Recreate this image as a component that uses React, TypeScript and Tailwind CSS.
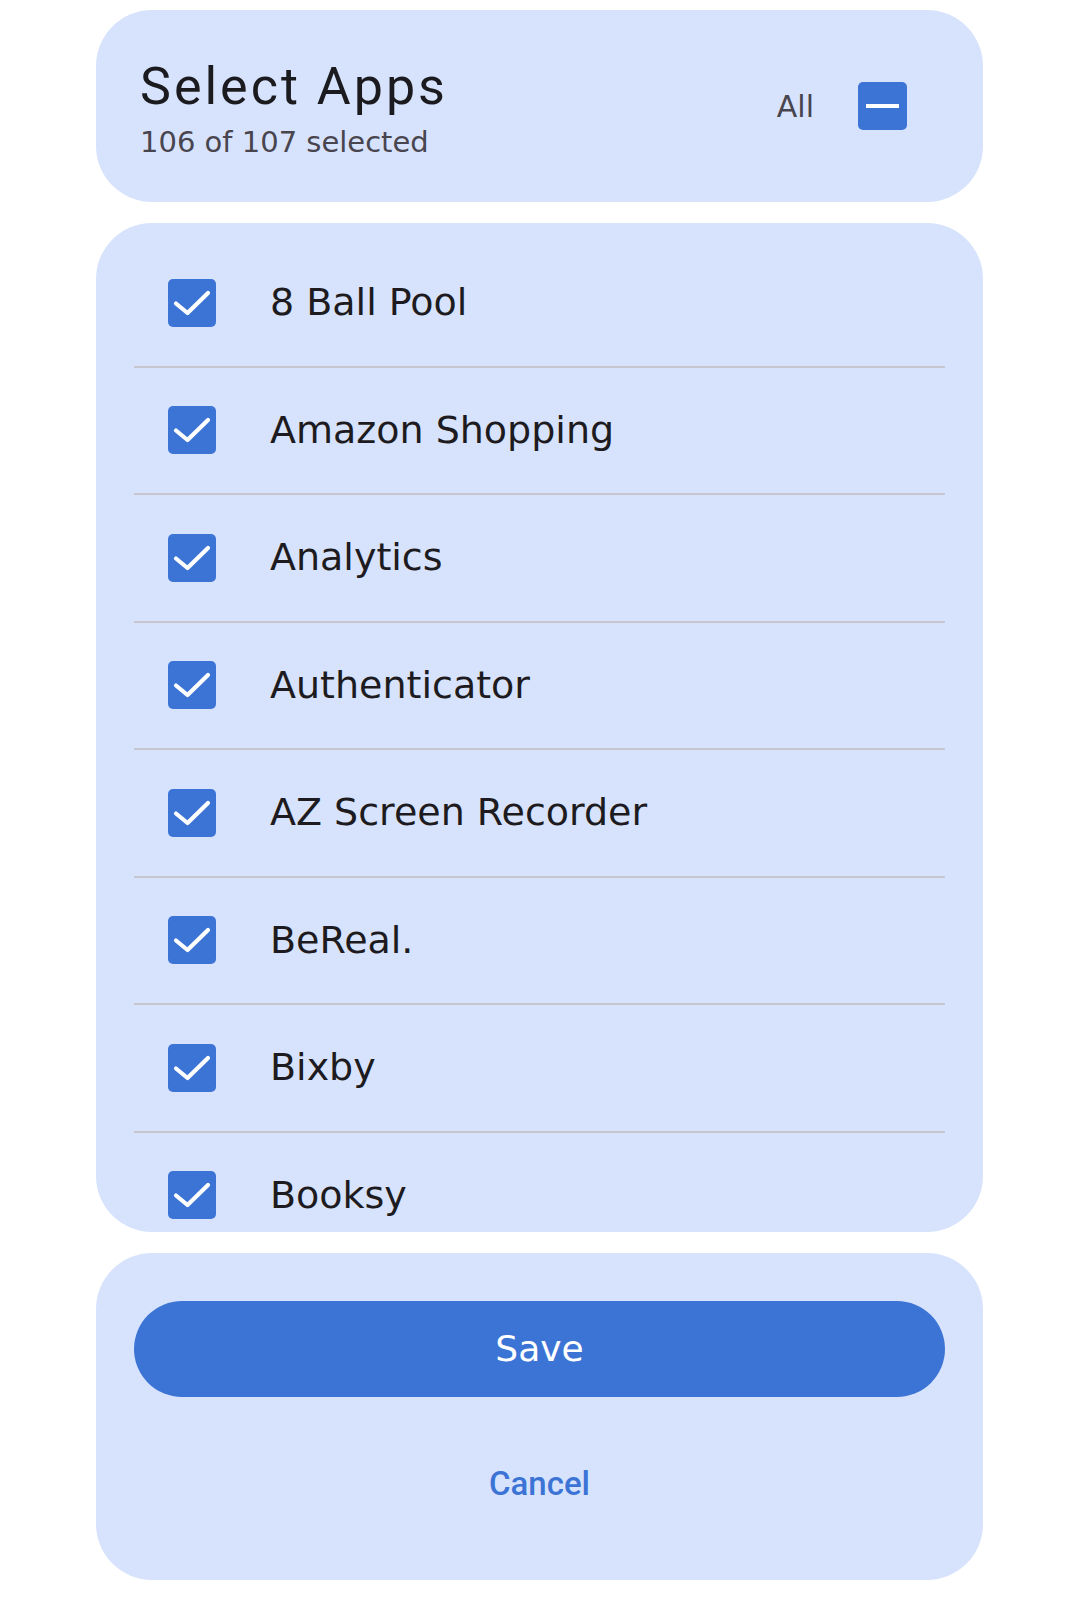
import React from "react";

const apps = [
  "8 Ball Pool",
  "Amazon Shopping",
  "Analytics",
  "Authenticator",
  "AZ Screen Recorder",
  "BeReal.",
  "Bixby",
  "Booksy",
];

const rounded = { fontFamily: '"DejaVu Sans", "Liberation Sans", sans-serif' };
const roboto = { fontFamily: 'Roboto, "Liberation Sans", sans-serif' };

function CheckBox() {
  return (
    <div className="w-[48px] h-[48px] rounded-[5px] bg-[#3c74d6] shrink-0 flex items-center justify-center">
      <svg width="48" height="48" viewBox="0 0 48 48" fill="none">
        <path
          d="M8 24.5 L19.5 34 L40 14"
          stroke="#ffffff"
          strokeWidth="4.2"
          strokeLinecap="round"
          strokeLinejoin="round"
        />
      </svg>
    </div>
  );
}

export default function App() {
  return (
    <div className="w-[1080px] h-[1600px] bg-white flex flex-col gap-[21px] pt-[10px] pl-[96px] pr-[97px]">
      {/* Header */}
      <div className="h-[192px] shrink-0 rounded-[56px] bg-[#d7e3fc] flex items-center justify-between pl-[44px] pr-[76px]">
        <div className="flex flex-col mt-[6px]">
          <div
            className="text-[52px] leading-[56px] text-[#1b1b1f] tracking-[3px]"
            style={roboto}
          >
            Select Apps
          </div>
          <div
            className="text-[29px] leading-[34px] text-[#49454f] mt-[10px]"
            style={rounded}
          >
            106 of 107 selected
          </div>
        </div>
        <div className="flex items-center gap-[44px]">
          <span className="text-[30px] text-[#49454f]" style={rounded}>
            All
          </span>
          <div className="w-[49px] h-[48px] rounded-[5px] bg-[#3c74d6] flex items-center justify-center">
            <div className="w-[33px] h-[4px] bg-white" />
          </div>
        </div>
      </div>

      {/* List */}
      <div className="h-[1009px] shrink-0 rounded-[56px] bg-[#d7e3fc] overflow-hidden px-[38px] pt-[17px]">
        {apps.map((name, i) => (
          <div key={name}>
            <div className="h-[125.5px] flex items-center pl-[34px] gap-[54px]">
              <CheckBox />
              <span className="text-[38px] text-[#1d1b20]" style={rounded}>
                {name}
              </span>
            </div>
            {i < apps.length - 1 && <div className="h-[2px] bg-[#c6c5d0]" />}
          </div>
        ))}
      </div>

      {/* Footer */}
      <div className="h-[327px] shrink-0 rounded-[56px] bg-[#d7e3fc] px-[38px] pt-[48px] flex flex-col">
        <button
          className="h-[96px] w-full rounded-full bg-[#3c74d6] text-white text-[36px] flex items-center justify-center"
          style={rounded}
        >
          Save
        </button>
        <button
          className="mt-[39px] h-[96px] w-full flex items-center justify-center text-[33px] font-medium text-[#3c74d6]"
          style={roboto}
        >
          Cancel
        </button>
      </div>
    </div>
  );
}
